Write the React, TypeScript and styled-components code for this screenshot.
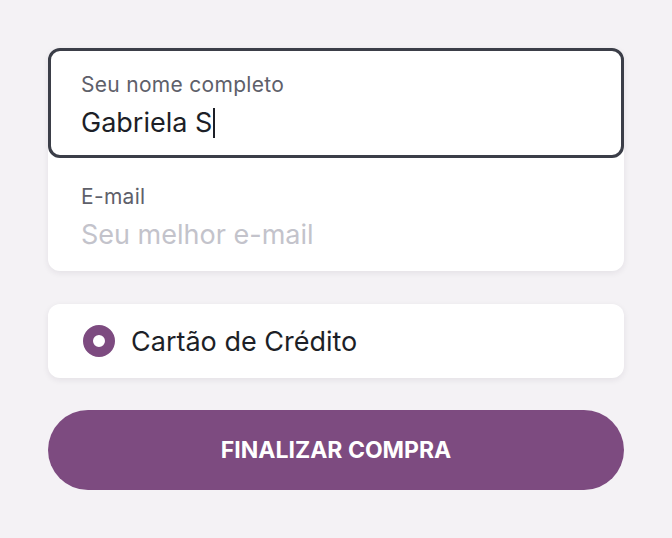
import React from 'react'
import styled, { createGlobalStyle } from 'styled-components'

const GlobalStyle = createGlobalStyle`
    body {
        margin: 0;
        background: #f4f2f5;
        font-family: Inter, "Noto Sans", sans-serif;
    }
`

export const App: React.FC = () => {
    return (
        <>
            <GlobalStyle />
            <Page>
                <FieldsCard>
                    <Field focused>
                        <Label>Seu nome completo</Label>
                        <Value>Gabriela S<Caret /></Value>
                    </Field>
                    <Field>
                        <Label>E-mail</Label>
                        <Value placeholder>Seu melhor e-mail</Value>
                    </Field>
                </FieldsCard>
                <PaymentCard>
                    <Radio />
                    <PaymentName>Cartão de Crédito</PaymentName>
                </PaymentCard>
                <SubmitButton>FINALIZAR COMPRA</SubmitButton>
            </Page>
        </>
    );
}

export default App;

const Page = styled.div`
    width: 576px;
    padding: 48px;
    display: flex;
    flex-direction: column;
`

const FieldsCard = styled.div`
    background: #fff;
    border-radius: 12px;
    box-shadow: 0 2px 6px rgba(40, 30, 50, 0.08);
    display: flex;
    flex-direction: column;
`

const Field = styled.div<{ focused?: boolean }>`
    height: ${({ focused }) => (focused ? '110px' : '113px')};
    box-sizing: border-box;
    padding: ${({ focused }) => (focused ? '21px 30px 0' : '26px 33px 0')};
    border: ${({ focused }) => (focused ? '3px solid #3b3e48' : 'none')};
    border-radius: 12px;
    display: flex;
    flex-direction: column;
    gap: 8px;
`

const Label = styled.span`
    font-size: 21px;
    letter-spacing: 0.3px;
    color: #5e606a;
    line-height: 26px;
`

const Value = styled.span<{ placeholder?: boolean }>`
    font-size: 27px;
    line-height: 34px;
    color: ${({ placeholder }) => (placeholder ? '#c3c3cb' : '#1d1f27')};
    display: flex;
    align-items: center;
`

const Caret = styled.span`
    display: inline-block;
    width: 2px;
    height: 30px;
    margin-left: 1px;
    background: #1d1f27;
`

const PaymentCard = styled.div`
    margin-top: 33px;
    height: 74px;
    background: #fff;
    border-radius: 12px;
    box-shadow: 0 2px 6px rgba(40, 30, 50, 0.08);
    display: flex;
    align-items: center;
    padding-left: 35px;
    gap: 16px;
`

const Radio = styled.span`
    width: 32px;
    height: 32px;
    box-sizing: border-box;
    border-radius: 50%;
    border: 10px solid #7d4b80;
    background: #fff;
`

const PaymentName = styled.span`
    font-size: 27px;
    color: #1d1f27;
`

const SubmitButton = styled.button`
    margin-top: 32px;
    height: 80px;
    border: none;
    border-radius: 40px;
    background: #7d4b80;
    color: #fff;
    font-family: inherit;
    font-weight: 700;
    font-size: 23px;
    cursor: pointer;
`
